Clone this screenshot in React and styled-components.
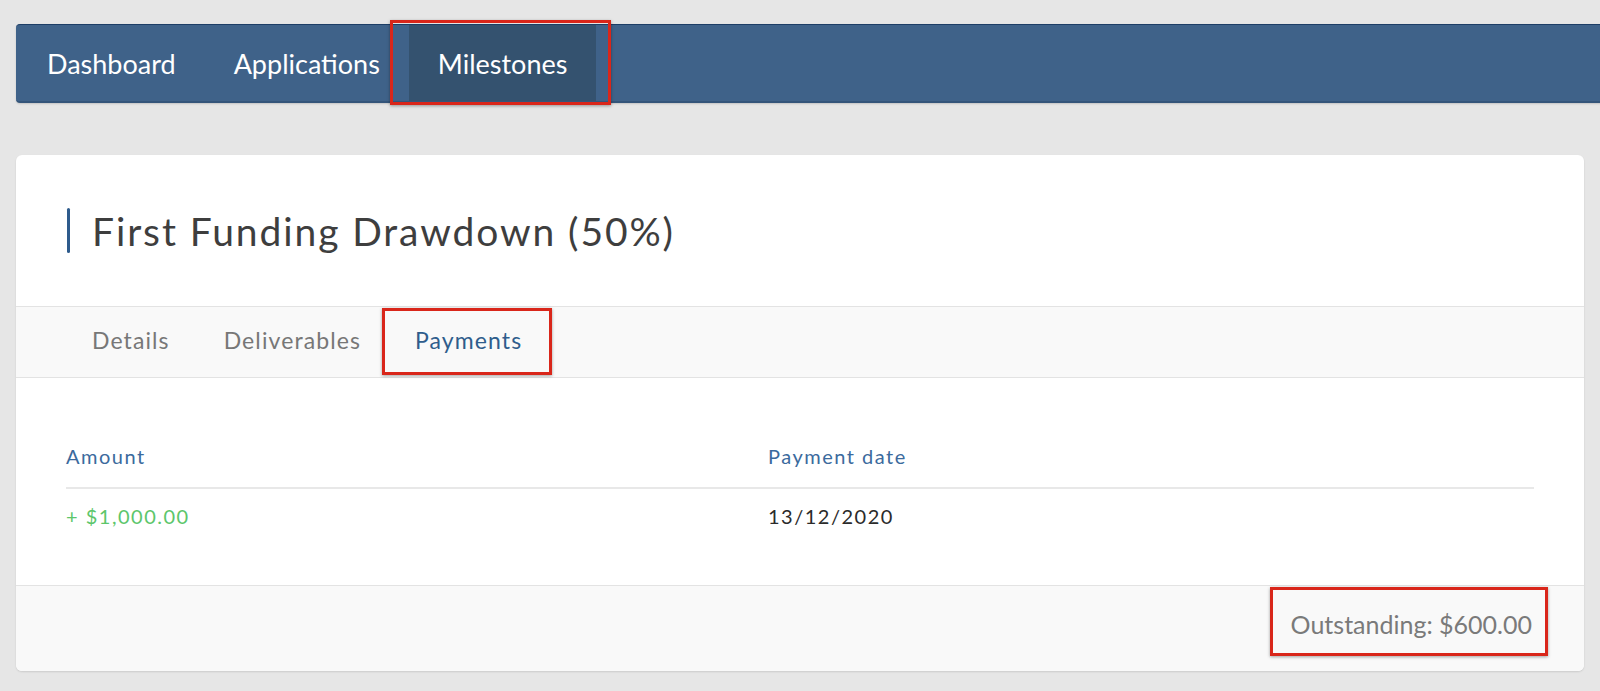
import React from 'react';
import styled, { createGlobalStyle } from 'styled-components';

const GlobalStyle = createGlobalStyle`
  html, body {
    margin: 0;
    padding: 0;
    background: #e6e6e6;
    overflow: hidden;
  }
  body {
    font-family: Lato, "Open Sans", sans-serif;
  }
`;

const Page = styled.div`
  padding: 24px 16px 20px 16px;
  display: flex;
  flex-direction: column;
  gap: 52px;
`;

const NavBar = styled.nav`
  display: flex;
  align-items: stretch;
  height: 76px;
  margin-right: -40px;
  padding-left: 2px;
  background: #3f6289;
  border-top: 1px solid #1d3e66;
  border-bottom: 2px solid #34557a;
  border-radius: 4px 0 0 4px;
  box-shadow: 0 1px 2px rgba(0, 0, 0, 0.15);
`;

const NavItem = styled.a`
  position: relative;
  display: flex;
  align-items: center;
  padding: 0 29px;
  font-size: 27px;
  color: #ffffff;
  text-decoration: none;
  background: ${(p) => (p.$active ? '#34526f' : 'transparent')};
`;

// red annotation boxes from the screenshot
const Marked = styled.span`
  position: absolute;
  top: ${(p) => p.$t}px;
  right: ${(p) => p.$r}px;
  bottom: ${(p) => p.$b}px;
  left: ${(p) => p.$l}px;
  border: 3px solid #d9261a;
  box-shadow: 0 1px 3px rgba(0, 0, 0, 0.35);
  pointer-events: none;
`;

const Card = styled.section`
  background: #ffffff;
  border-radius: 6px;
  box-shadow: 0 1px 2px rgba(0, 0, 0, 0.12);
  overflow: hidden;
`;

const Header = styled.div`
  height: 151px;
  display: flex;
  align-items: center;
  padding: 0 51px;
`;

const Title = styled.h1`
  margin: 0;
  display: flex;
  align-items: center;
  gap: 22px;
  font-size: 39px;
  letter-spacing: 1.9px;
  font-weight: 400;
  color: #3e3e3e;

  &::before {
    content: '';
    width: 3px;
    height: 45px;
    border-radius: 2px;
    background: #2e5b8c;
  }
`;

const Tabs = styled.div`
  display: flex;
  height: 70px;
  padding-left: 49px;
  background: #f9f9f9;
  border-top: 1px solid #e3e3e3;
  border-bottom: 1px solid #e3e3e3;
`;

const Tab = styled.div`
  position: relative;
  display: flex;
  align-items: center;
  padding: 0 27px 5px;
  font-size: 23px;
  letter-spacing: 1.1px;
  color: ${(p) => (p.$active ? '#2f5d8c' : '#777777')};
`;

const Body = styled.div`
  padding: 47px 50px 42px;
`;

const Row = styled.div`
  display: grid;
  grid-template-columns: 702px 1fr;
  align-items: center;
  height: ${(p) => (p.$head ? '62px' : '54px')};
  font-size: 20px;
  letter-spacing: 1.5px;
  border-bottom: ${(p) => (p.$head ? '2px solid #e8e8e8' : 'none')};
  color: ${(p) => (p.$head ? '#3b6a9d' : '#2b2b2b')};
`;

const Amount = styled.span`
  color: #5cc66b;
`;

const Footer = styled.div`
  display: flex;
  justify-content: flex-end;
  align-items: center;
  height: 86px;
  padding: 0 52px 10px;
  box-sizing: border-box;
  background: #f9f9f9;
  border-top: 1px solid #e3e3e3;
`;

const Outstanding = styled.span`
  position: relative;
  font-size: 25px;
  line-height: 30px;
  color: #7a7a7a;
`;

export default function App() {
  return (
    <>
      <GlobalStyle />
      <Page>
        <NavBar>
          <NavItem>Dashboard</NavItem>
          <NavItem>Applications</NavItem>
          <NavItem $active>
            Milestones
            <Marked $t={-5} $r={-15} $b={-4} $l={-19} />
          </NavItem>
        </NavBar>

        <Card>
          <Header>
            <Title>First Funding Drawdown (50%)</Title>
          </Header>
          <Tabs>
            <Tab>Details</Tab>
            <Tab>Deliverables</Tab>
            <Tab $active>
              Payments
              <Marked $t={1} $r={-3} $b={2} $l={-6} />
            </Tab>
          </Tabs>
          <Body>
            <Row $head>
              <span>Amount</span>
              <span>Payment date</span>
            </Row>
            <Row>
              <Amount>+ $1,000.00</Amount>
              <span>13/12/2020</span>
            </Row>
          </Body>
          <Footer>
            <Outstanding>
              Outstanding: $600.00
              <Marked $t={-22} $r={-16} $b={-17} $l={-21} />
            </Outstanding>
          </Footer>
        </Card>
      </Page>
    </>
  );
}
